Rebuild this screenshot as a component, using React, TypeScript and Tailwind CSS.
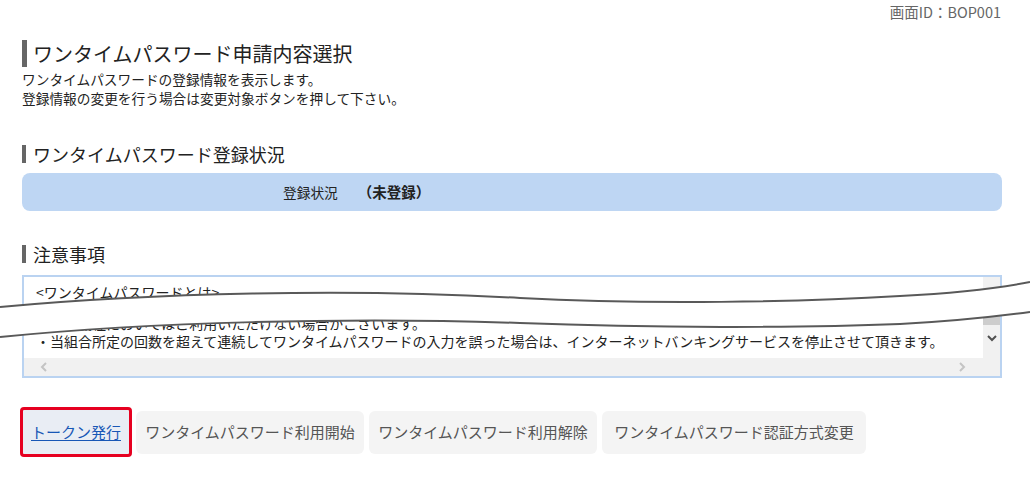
import React from 'react';

const lines = {
  head: '<ワンタイムパスワードとは>',
  env: '・一部機種においてはご利用いただけない場合がございます。',
  stop: '・当組合所定の回数を超えて連続してワンタイムパスワードの入力を誤った場合は、インターネットバンキングサービスを停止させて頂きます。',
};

const buttons = [
  { label: 'ワンタイムパスワード利用開始', w: 'w-[228px]' },
  { label: 'ワンタイムパスワード利用解除', w: 'w-[228px]' },
  { label: 'ワンタイムパスワード認証方式変更', w: 'w-[264px]' },
];

function Chevron({ dir, color }: { dir: 'left' | 'right' | 'down'; color: string }) {
  const pts = dir === 'left' ? '6,1 2,5 6,9' : dir === 'right' ? '2,1 6,5 2,9' : '1,3 5,7 9,3';
  return (
    <svg width="10" height="10" viewBox="0 0 10 10">
      <polyline points={pts} fill="none" stroke={color} strokeWidth="2" />
    </svg>
  );
}

function SectionTitle({ children }: { children: React.ReactNode }) {
  return (
    <h2 className="border-l-4 border-[#666] pl-[7px] text-[18px] leading-[18px] text-[#222]">{children}</h2>
  );
}

export default function App() {
  return (
    <div className="relative w-[1030px] h-[483px] overflow-hidden bg-white font-['Noto_Sans_CJK_JP',sans-serif] text-[#222]">
      <div className="flex justify-end pr-[29px] pt-[3px] text-[14.5px] leading-[18px] text-[#666]">画面ID：BOP001</div>

      <div className="pl-[22px] pr-[28px]">
        <h1 className="mt-[19px] border-l-[5px] border-[#666] pl-[6px] text-[20px] leading-[27px] text-[#222]">
          ワンタイムパスワード申請内容選択
        </h1>
        <p className="mt-[3px] text-[13.7px] leading-[19px] text-[#222]">
          ワンタイムパスワードの登録情報を表示します。
          <br />
          登録情報の変更を行う場合は変更対象ボタンを押して下さい。
        </p>

        <div className="mt-[37px]">
          <SectionTitle>ワンタイムパスワード登録状況</SectionTitle>
        </div>
        <div className="mt-[10px] h-[38px] rounded-[8px] bg-[#bed6f3] flex items-center pl-[261px]">
          <span className="text-[13.7px]">登録状況</span>
          <span className="ml-[20px] text-[14.5px] font-bold">（未登録）</span>
        </div>

        <div className="mt-[34px]">
          <SectionTitle>注意事項</SectionTitle>
        </div>

        {/* notes box with its scrollbars */}
        <div className="mt-[12px] h-[103px] border-2 border-[#bad3f1] flex">
          <div className="flex-1 min-w-0 flex flex-col">
            <div className="flex-1 overflow-hidden whitespace-nowrap pl-[12px] pt-[6px] text-[14px] leading-[18px]">
              <div>{lines.head}</div>
              <div className="mt-[13px]">{lines.env}</div>
              <div>{lines.stop}</div>
            </div>
            <div className="h-[18px] bg-[#f1f1f1] flex items-center justify-between pl-[16px] pr-[15px]">
              <Chevron dir="left" color="#c4c4c4" />
              <Chevron dir="right" color="#c4c4c4" />
            </div>
          </div>
          <div className="w-[17px] bg-[#f1f1f1] flex flex-col items-center">
            <div className="h-[17px]" />
            <div className="h-[31px] w-full bg-[#cdcdcd]" />
            <div className="mt-[8px]">
              <Chevron dir="down" color="#505050" />
            </div>
          </div>
        </div>
      </div>

      <div className="mt-[29px] pl-[20px] flex items-center gap-[5px]">
        <button className="w-[112px] h-[50px] mr-[-1px] rounded-[4px] border-[3px] border-[#e60020] bg-[#e9edf4] text-[15px] text-[#1857b6] underline underline-offset-2">
          トークン発行
        </button>
        {buttons.map(b => (
          <button key={b.label} className={`${b.w} h-[43px] rounded-[6px] bg-[#f4f4f4] text-[15px] text-[#555] whitespace-nowrap`}>
            {b.label}
          </button>
        ))}
      </div>

      {/* torn-paper cut marking omitted lines */}
      <svg className="absolute inset-0 pointer-events-none" width="1030" height="483" viewBox="0 0 1030 483">
        <path
          d="M0,307 C150,293 350,288 520,298 C650,305 800,302 900,296 C960,293 1000,288 1030,282 L1030,312 C1000,316 960,321 900,324 C800,328 650,328 520,323 C350,317 150,322 0,337 Z"
          fill="#fff"
        />
        <path
          d="M0,307 C150,293 350,288 520,298 C650,305 800,302 900,296 C960,293 1000,288 1030,282"
          fill="none"
          stroke="#595959"
          strokeWidth="2"
        />
        <path
          d="M0,337 C150,322 350,317 520,323 C650,328 800,328 900,324 C960,321 1000,316 1030,312"
          fill="none"
          stroke="#595959"
          strokeWidth="2"
        />
      </svg>
    </div>
  );
}
